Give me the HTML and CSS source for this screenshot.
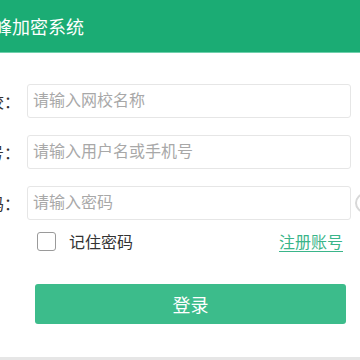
FILE: index.html
```html
<!DOCTYPE html>
<html lang="zh-CN">
<head>
<meta charset="utf-8">
<title>登录</title>
<link rel="stylesheet" href="styles.css">
</head>
<body>
<div class="dialog">
  <div class="header"><span class="title">峰加密系统</span></div>
  <form class="form">
    <div class="row">
      <label class="label">网校：</label>
      <input class="field" type="text" placeholder="请输入网校名称">
    </div>
    <div class="row">
      <label class="label">账号：</label>
      <input class="field" type="text" placeholder="请输入用户名或手机号">
    </div>
    <div class="row">
      <label class="label">密码：</label>
      <input class="field" type="password" placeholder="请输入密码">
      <span class="eye"></span>
    </div>
    <div class="opts">
      <label class="remember"><span class="box"></span><span>记住密码</span></label>
      <a class="reg" href="#">注册账号</a>
    </div>
    <button class="btn" type="button">登录</button>
  </form>
  <div class="footer"></div>
</div>
</body>
</html>
```
FILE: styles.css
```css
html, body {
  margin: 0;
  padding: 0;
  width: 360px;
  height: 360px;
  overflow: hidden;
  background: #fff;
  font-family: "Liberation Sans", "Noto Sans CJK SC", sans-serif;
}
.dialog {
  width: 360px;
  height: 360px;
  display: flex;
  flex-direction: column;
  overflow: hidden;
}
.header {
  height: 52px;
  flex: none;
  background: #1bac74;
  border-bottom: 1px solid #6fd0ac;
  display: flex;
  align-items: center;
  overflow: hidden;
}
.title {
  margin-left: -6px;
  color: #fff;
  font-size: 18px;
  white-space: nowrap;
}
.form {
  padding-top: 31px;
  display: flex;
  flex-direction: column;
  flex: 1;
}
.row {
  display: flex;
  align-items: center;
  margin-bottom: 17px;
  white-space: nowrap;
}
.label {
  width: 60px;
  margin-left: -40px;
  text-align: right;
  font-size: 16px;
  color: #333;
  flex: none;
}
.field {
  margin-left: 7px;
  width: 324px;
  height: 34px;
  box-sizing: border-box;
  border: 1px solid #e6e6e6;
  border-radius: 3px;
  padding: 0 0 0 5px;
  font-size: 16px;
  font-family: inherit;
  color: #333;
  outline: none;
  flex: none;
}
.field::placeholder { color: #a8a8a8; }
.eye {
  flex: none;
  margin-left: 4px;
  width: 16px;
  height: 16px;
  border: 2px solid #d8d8d8;
  border-radius: 50%;
}
.opts {
  display: flex;
  align-items: center;
  justify-content: space-between;
  margin: -7px 17px 0 37px;
  height: 22px;
}
.remember {
  display: flex;
  align-items: center;
  font-size: 16px;
  color: #333;
}
.box {
  width: 17px;
  height: 17px;
  border: 1px solid #9a9a9a;
  border-radius: 3px;
  margin-right: 13px;
}
.reg {
  color: #3ab58a;
  font-size: 16px;
  text-decoration: underline;
  text-underline-offset: 3px;
}
.btn {
  margin: 32px 0 0 35px;
  width: 311px;
  height: 40px;
  border: none;
  border-radius: 3px;
  background: #3cbc8b;
  color: #fff;
  font-size: 18px;
  font-family: inherit;
}
.footer {
  height: 3px;
  flex: none;
  background: #e6e6e6;
}
```
